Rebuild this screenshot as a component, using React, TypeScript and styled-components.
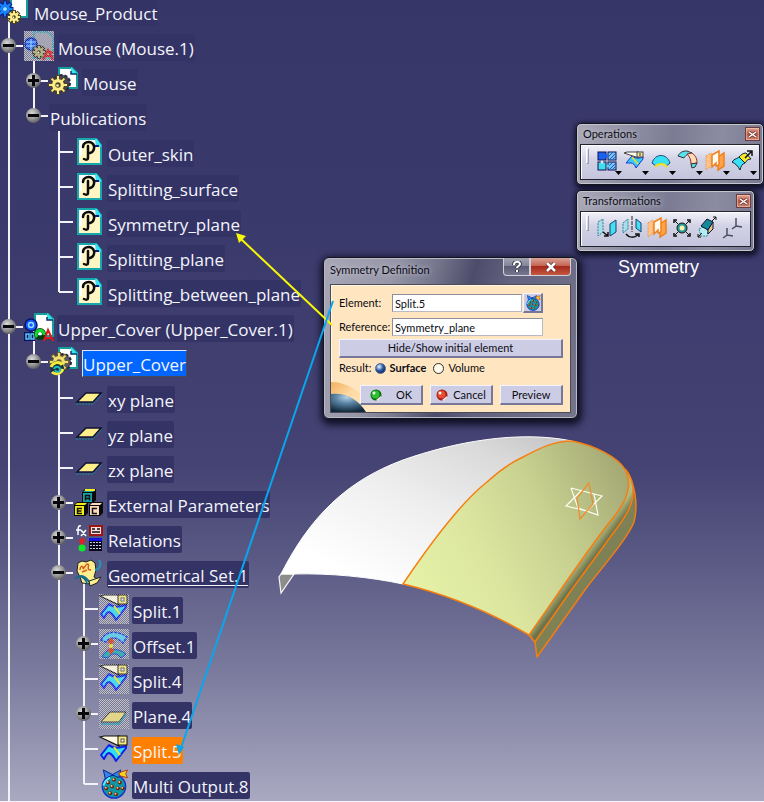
import React, { useState } from "react";
import styled, { createGlobalStyle } from "styled-components";

const GlobalStyle = createGlobalStyle`
  * { box-sizing: border-box; }
  body { margin: 0; background: #34346a; }
  button, input { font: inherit; color: inherit; }
`;

/* ---------- page ---------- */

const Viewport = styled.main`
  position: relative;
  height: 100vh;
  overflow: hidden;
  border-bottom: 1px solid #f4f4f8;
  background: linear-gradient(#363668 0%, #3b3a6c 30%, #444373 58%, #5a5a85 70%, #7b7b9e 84%, #a9a9c1 100%);
  color: #f4f4fb;
  font-family: "Open Sans", "Noto Sans", sans-serif;
`;

/* ---------- specification tree ---------- */

const Tree = styled.nav`
  margin-top: -7px;
  font-size: 17px;
  line-height: 26px;
  width: max-content;
`;

const Branch = styled.ul<{ $root?: boolean }>`
  list-style: none;
  margin: 0 0 0 ${(p) => (p.$root ? 0 : 25)}px;
  padding: 0;
`;

const Node = styled.li<{ $ends?: boolean; $gap?: number }>`
  padding-top: ${(p) => p.$gap || 0}px;
  background: linear-gradient(#f2f2f8, #f2f2f8) 8px 0 / 2px ${(p) => (p.$ends ? "18px" : "100%")} no-repeat;
`;

const Row = styled.div<{ $trunk?: number }>`
  display: flex;
  align-items: center;
  height: 35px;
  ${(p) =>
    p.$trunk !== undefined &&
    `background: linear-gradient(#f2f2f8, #f2f2f8) ${p.$trunk}px 100% / 2px 50% no-repeat;`}
`;

const Gutter = styled.span`
  flex: none;
  display: flex;
  align-items: center;
  width: 24px;
  height: 100%;
  background: linear-gradient(#f2f2f8, #f2f2f8) 9px 50% / 14px 2px no-repeat;
`;

const Toggle = styled.button`
  width: 17px;
  height: 17px;
  padding: 0;
  border: 0;
  background: none;
  cursor: pointer;
  svg { display: block; }
`;

const IconSlot = styled.span`
  flex: none;
  display: flex;
  justify-content: center;
  width: 30px;
  margin-right: 3px;
  svg { display: block; overflow: visible; }
`;

const Label = styled.span<{ $tone?: string }>`
  height: 27px;
  margin-top: 4px;
  padding: 2px 1px 0;
  border-radius: 2px;
  white-space: nowrap;
  background: #333366;
  ${(p) => p.$tone === "active" && "background: #0066ff; border-radius: 0; border: 1px solid #dfe6f5; border-right-color: #4a4a55; border-bottom-color: #4a4a55; padding: 1px 0 0;"}
  ${(p) => p.$tone === "picked" && "background: #ff8000;"}
  ${(p) => p.$tone === "current" && "text-decoration: underline; text-decoration-thickness: 1px; text-underline-offset: 3px;"}
`;

/* ---------- windows ---------- */

const Frame = styled.section`
  position: relative;
  width: max-content;
  border: 1px solid #14141f;
  border-radius: 5px;
  padding: 0 3px 4px 3px;
  background: linear-gradient(100deg, #a9a9b7 0%, #8f8fa3 28%, #7b7b94 50%, #8c8ca1 75%, #77778f 100%);
  box-shadow: inset 0 0 0 1px #c5c5d2, 1px 2px 5px 2px rgba(8, 8, 26, 0.8);
  color: #0c0c14;
  font-family: Lato, "Open Sans", sans-serif;
  font-size: 11px;
  line-height: 16px;
`;

const TitleBar = styled.header`
  display: flex;
  justify-content: space-between;
  align-items: center;
  height: 20px;
  padding: 0 0 0 3px;
`;

const Title = styled.h2`
  margin: 0;
  font-size: 11px;
  font-weight: 400;
  text-shadow: 0 0 5px #d5d5e0;
`;

const CloseButton = styled.button`
  display: grid;
  place-items: center;
  width: 15px;
  height: 14px;
  padding: 0;
  border: 1px solid #6b3d40;
  background: linear-gradient(#e3a593, #bd5a44 50%, #c9806c);
  box-shadow: inset 0 0 0 1px rgba(255, 220, 205, 0.45);
`;

const ToolStrip = styled.div<{ $end: number }>`
  display: flex;
  align-items: flex-start;
  border: 1px solid #23232f;
  height: 36px;
  padding: 3px ${(p) => p.$end}px 0 5px;
  background: linear-gradient(#f2f2fa, #d3d3e6 40%, #c4c4dd);
  box-shadow: inset 1px 1px 0 #fff;
`;

const Grip = styled.span`
  width: 3px;
  height: 16px;
  margin-right: 6px;
  border: 1px solid #fff;
  border-right-color: #9a9aae;
  border-bottom-color: #9a9aae;
`;

const Tool = styled.button<{ $w: number }>`
  width: ${(p) => p.$w}px;
  height: 29px;
  padding: 0;
  border: 0;
  background: none;
  svg { display: block; }
`;

const Palettes = styled.aside`
  position: absolute;
  left: 576px;
  top: 123px;
  display: flex;
  flex-direction: column;
  align-items: flex-start;
  gap: 5px;
`;

const Caption = styled.p`
  margin: 0 0 0 42px;
  color: #fff;
  font: 18px/20px "Liberation Sans", Arial, sans-serif;
`;

const DialogPlace = styled.div`
  position: absolute;
  left: 323px;
  top: 257px;
`;

const DialogFrame = styled(Frame)`
  padding: 0 6px 5px;
  border-radius: 6px;
  background: linear-gradient(105deg, #a7a7b6 0%, #9696a8 25%, #77778e 38%, #4d4d6b 52%, #62627f 65%, #75758d 100%);
  box-shadow: inset 0 0 0 1px #b9b9c8, 1px 3px 7px 3px rgba(8, 8, 26, 0.85);
`;

const DialogTitle = styled(TitleBar)`
  height: 26px;
  padding: 0;
  align-items: flex-start;
  h2 { padding-top: 4px; }
`;

const Caps = styled.div`
  display: flex;
`;

const CapButton = styled.button<{ $close?: boolean }>`
  display: grid;
  place-items: center;
  width: ${(p) => (p.$close ? 41 : 27)}px;
  height: 18px;
  padding: 0;
  border: 1px solid #d0d0dc;
  border-top: 0;
  border-radius: ${(p) => (p.$close ? "0 0 4px 0" : "0 0 0 4px")};
  background: ${(p) =>
    p.$close
      ? "linear-gradient(#d9a297, #c56554 45%, #a62a1d 50%, #c4583f)"
      : "linear-gradient(#a3a3b3, #85859a 45%, #5b5b75 50%, #77778f)"};
`;

const DialogBody = styled.form`
  position: relative;
  isolation: isolate;
  display: flex;
  flex-direction: column;
  border: 1px solid #4b4a55;
  padding: 6px 7px 7px 8px;
  background: #ffe6c0;
  box-shadow: inset 1px 1px 0 #fff6e4;
`;

const Planet = styled.svg`
  position: absolute;
  left: 0;
  bottom: 0;
  z-index: -1;
`;

const Field = styled.div`
  display: grid;
  grid-template-columns: 53px 151px;
  align-items: center;
  height: 24px;
  padding-right: 20px;
`;

const FieldBox = styled.span`
  display: flex;
  align-items: center;
`;

const TextBox = styled.input`
  flex: 1;
  min-width: 0;
  height: 18px;
  padding: 0 2px;
  border: 1px solid #8d8d9c;
  border-right-color: #b9b9c4;
  border-bottom-color: #b9b9c4;
  background: #fff;
`;

const PushButton = styled.button`
  display: flex;
  align-items: center;
  justify-content: center;
  height: 19px;
  padding: 0;
  border: 1px solid #f3f3fb;
  border-right: 2px solid #77779a;
  border-bottom: 2px solid #77779a;
  background: #cccce4;
`;

const SquareButton = styled(PushButton)`
  width: 20px;
  height: 20px;
  margin-left: 1px;
`;

const ActionButton = styled(PushButton)`
  width: 63px;
  height: 20px;
  gap: 14px;
`;

const CancelButton = styled(ActionButton)`
  gap: 5px;
`;

const Result = styled.fieldset`
  display: flex;
  align-items: center;
  margin: 2px 0 0;
  padding: 0;
  border: 0;
  height: 24px;
`;

const Choice = styled.label`
  display: flex;
  align-items: center;
  margin-left: 3px;
  margin-right: 4px;
`;

const Radio = styled.input`
  appearance: none;
  width: 11px;
  height: 11px;
  margin: 0 4px 0 0;
  border: 1px solid #2b2b33;
  border-radius: 50%;
  background: #fffbe9;
  &:checked {
    border-color: #4b618e;
    background: radial-gradient(circle at 35% 30%, #c7dcf5 0 10%, #2c5aa3 45%, #0c2352 85%);
  }
  &:checked + span { font-weight: 700; }
`;

const Actions = styled.div`
  display: flex;
  justify-content: flex-end;
  gap: 7px;
  padding-top: 1px;
`;

const Scene = styled.svg`
  position: absolute;
  left: 270px;
  top: 425px;
`;

const Leaders = styled.svg`
  position: absolute;
  left: 0;
  top: 0;
  pointer-events: none;
`;

/* ---------- tree icons ---------- */

const Gear = ({ x, y, r, fill, edge }: { x: number; y: number; r: number; fill: string; edge: string }) => {
  const teeth = [0, 45, 90, 135];
  const reach = r * 1.5;
  return (
    <g transform={`translate(${x} ${y})`}>
      {teeth.map((a) => (
        <rect key={`o${a}`} x={-reach - 1} y="-2" width={reach * 2 + 2} height="4" fill={edge} transform={`rotate(${a})`} />
      ))}
      <circle r={r + 1} fill={edge} />
      {teeth.map((a) => (
        <rect key={`i${a}`} x={-reach} y="-1" width={reach * 2} height="2" fill={fill} transform={`rotate(${a})`} />
      ))}
      <circle r={r} fill={fill} />
      <circle r={r * 0.45} fill={edge} />
      <circle cx="-.5" cy=".5" r={r * 0.22} fill="#fff7a8" />
    </g>
  );
};

const Page = ({ x, y, w, h }: { x: number; y: number; w: number; h: number }) => (
  <g transform={`translate(${x} ${y})`}>
    <path d={`M1 1H${w - 6}L${w - 1} 6V${h - 1}H1Z`} fill="#fff" stroke="#159c9c" strokeWidth="2" />
    <path d={`M${w - 7} 0V7H${w}Z`} fill="#35e6ef" />
    <path d={`M${w - 7} 4V7H${w - 1}`} fill="none" stroke="#12306b" strokeWidth="1.500" />
  </g>
);

const Veil = ({ id, children }: { id: string; children: React.ReactNode }) => (
  <svg width="30" height="30" viewBox="0 0 30 30" aria-hidden="true">
    <defs>
      <pattern id={id} width="2" height="2" patternUnits="userSpaceOnUse">
        <rect width="1" height="1" fill="#c2c2ce" />
        <rect x="1" y="1" width="1" height="1" fill="#c2c2ce" />
      </pattern>
    </defs>
    <rect width="30" height="30" fill="#77778f" />
    <rect width="30" height="30" fill={`url(#${id})`} />
    {children}
    <rect width="30" height="30" fill={`url(#${id})`} opacity=".4" />
  </svg>
);

const RootIcon = () => (
  <svg width="30" height="30" viewBox="0 0 30 30" aria-hidden="true">
    <Page x={10} y={-4} w={18} h={26} />
    <Gear x={5} y={13} r={5} fill="#1685ff" edge="#0b1d86" />
    <circle cx="5" cy="13" r="2" fill="#8fe6ff" />
    <Gear x={14} y={21} r={4} fill="#ffee8c" edge="#4a4424" />
  </svg>
);

const HiddenComponentIcon = () => (
  <Veil id="dots-component">
    <path d="M10 1h14l5 5v21H10z" fill="#9d9dad" stroke="#1aa3b0" strokeWidth="1.500" strokeDasharray="2 1" />
    <circle cx="7" cy="13" r="6" fill="#1450f0" stroke="#06209c" strokeWidth="1.500" />
    <path d="M2 11h10M2 15h10M7 8v11" stroke="#9be2ff" strokeWidth="1" />
    <Gear x={15} y={21} r={4} fill="#b4ae78" edge="#33332c" />
    <path d="M19 29l5-10 5 10M21 25h8M24 20l5 2" stroke="#d81818" fill="none" strokeWidth="2" />
  </Veil>
);

const ComponentIcon = () => (
  <svg width="30" height="30" viewBox="0 0 30 30" aria-hidden="true">
    <Page x={10} y={1} w={20} h={24} />
    <circle cx="7" cy="13" r="6" fill="#1458ff" stroke="#06126e" strokeWidth="1.500" />
    <circle cx="7" cy="13" r="2.500" fill="none" stroke="#8fdcff" strokeWidth="1.500" />
    <path d="M0 20h11v9H0z" fill="#06126e" />
    <path d="M2 22h3v5H2zM7 22h3v5H7z" fill="none" stroke="#5fc5e8" strokeWidth="1.500" />
    <circle cx="16" cy="22" r="4" fill="none" stroke="#053c0c" strokeWidth="4" />
    <path d="M13 25a4 4 0 1 1 7-2" fill="none" stroke="#16d832" strokeWidth="3" />
    <path d="M20 29l4-11 5 11M22 26h6" stroke="#e01818" fill="none" strokeWidth="2" />
  </svg>
);

const PartIcon = () => (
  <svg width="30" height="30" viewBox="0 0 30 30" aria-hidden="true">
    <Page x={9} y={1} w={20} h={22} />
    <circle cx="13" cy="17" r="8" fill="#44445c" stroke="#26263e" strokeWidth="2" strokeDasharray="3 2" />
    <Gear x={9} y={19} r={6} fill="#ffeb85" edge="#4c462a" />
  </svg>
);

const ActivePartIcon = () => (
  <svg width="30" height="30" viewBox="0 0 30 30" aria-hidden="true">
    <Page x={9} y={0} w={20} h={22} />
    <circle cx="14" cy="15" r="8" fill="#55556f" stroke="#22223c" strokeWidth="2" strokeDasharray="3 2" />
    <Gear x={10} y={15} r={6} fill="#f0de70" edge="#6a6230" />
    <circle cx="8" cy="21" r="7" fill="#17343c" />
    <path d="M2 20c2-5 9-6 11-2M14 22c-2 5-8 6-11 3" fill="none" stroke="#f2ec3a" strokeWidth="3" />
    <path d="M5 22c1-3 5-3 6 0s-4 4-5 1" fill="none" stroke="#22b9c4" strokeWidth="2" />
  </svg>
);

const PublicationIcon = () => (
  <svg width="25" height="27" viewBox="0 0 25 27" aria-hidden="true">
    <path d="M1 1h18l5 6v19H1z" fill="#fff6c4" stroke="#15a9ae" strokeWidth="2" />
    <path d="M2 2h16v3H2zM2 2h3v16H2z" fill="#fff" />
    <path d="M18 1h2l4 6v2h-5z" fill="#35e2ee" />
    <path d="M6 9c0-5 6-6 9-4 4 3 2 9-2 10M11 8v12c0 2-2 2-4 1" fill="none" stroke="#0c0c0c" strokeWidth="2.500" strokeLinecap="round" />
    <path d="M18 8h4" stroke="#181880" strokeWidth="2" />
  </svg>
);

const PlaneIcon = () => (
  <svg width="28" height="14" viewBox="0 0 28 14" aria-hidden="true">
    <path d="M2 11L11 2h15l-8 9z" fill="#ffee8a" stroke="#111133" strokeWidth="1.500" />
    <path d="M1 13h17L27 3" fill="none" stroke="#178f96" strokeWidth="1" strokeDasharray="2 1" />
  </svg>
);

const Block = ({ x, y, fill, glyph }: { x: number; y: number; fill: string; glyph: string }) => (
  <g transform={`translate(${x} ${y})`}>
    <path d="M0 3L3 0h11v11l-3 3H0z" fill="#0a0a0a" />
    <path d="M3 1h10l-2 2H1z" fill={fill} />
    <rect x="1" y="4" width="9" height="9" fill={fill} />
    <path d={glyph} fill="none" stroke="#111" strokeWidth="1.500" />
  </g>
);

const ParametersIcon = () => (
  <svg width="30" height="28" viewBox="0 0 30 28" aria-hidden="true">
    <Block x={8} y={0} fill="#15a3a6" glyph="M3.500 11.500v-5h4v5M3.500 9.500h4" />
    <Block x={0} y={13} fill="#f4ee1c" glyph="M8 6.500H3.500v5H8M3.500 9h4" />
    <Block x={15} y={13} fill="#fcd9bd" glyph="M8 6.500H3.500v5H8" />
    <path d="M11 1h10" stroke="#f4ee1c" strokeWidth="2" />
  </svg>
);

const RelationsIcon = () => (
  <svg width="28" height="28" viewBox="0 0 28 28" aria-hidden="true">
    <path d="M6 2c-3-1-3 2-3 9M1 6h5M6 6l5 6M11 6l-5 6" stroke="#fff" fill="none" strokeWidth="1.500" />
    <rect x="15" y="2" width="12" height="9" fill="#f5e0dc" stroke="#9b1515" strokeWidth="2" />
    <path d="M17 5h3M22 5h3M17 8h8" stroke="#111" strokeWidth="1.500" />
    <path d="M7 14v12M4 17h6" stroke="#e32020" strokeWidth="3" />
    <circle cx="7" cy="24" r="3.500" fill="#12e62c" />
    <path d="M14 14h13v3H14z" fill="#1414e8" />
    <rect x="14" y="17" width="13" height="10" fill="#080818" />
    <path d="M15 18.500h11M15 21.500h11M15 24.500h11" stroke="#c9cdf0" strokeWidth="1" strokeDasharray="2 1" />
  </svg>
);

const GeoSetIcon = () => (
  <svg width="30" height="28" viewBox="0 0 30 28" aria-hidden="true">
    <path d="M4 4l4-2 4 1 5-2 4 3 1 7-2 7 4 3-7 4-9-1-2-6-3-6z" fill="#ffee8e" stroke="#222" />
    <path d="M6 11c0-4 3-5 3-2s3-4 4-4c4 0-2 6 4 6M8 13l5-2" fill="none" stroke="#d85a1c" strokeWidth="1.500" />
    <path d="M25 1c3 4 1 9-4 10" fill="none" stroke="#2494b8" strokeWidth="2" />
    <path d="M1 20c6-6 12-3 16 6M3 18c4-1 8 0 12 5M5 17c4 1 7 4 9 9" fill="none" stroke="#126a8c" strokeWidth="1.500" />
    <path d="M15 22l12-4-4 6-7 3z" fill="#ffee8e" stroke="#222" />
  </svg>
);

const SplitArt = () => (
  <>
    <path d="M2 20L10 10c3 3 8 4 17 1v2L17 26c-2-4-4-7-7-8-2 0-3 2-5 6z" fill="#31dcf6" stroke="#1020e8" strokeWidth="2" strokeLinejoin="round" />
    <path d="M15 12l6 8" stroke="#f2e916" strokeWidth="2" />
    <path d="M1 2l4-1h15v10z" fill="#fffbe2" stroke="#111" strokeWidth="1.200" />
    <rect x="19" y="1" width="9" height="9" fill="#f8e97c" stroke="#111" />
    <rect x="22" y="4" width="3" height="3" fill="#fff" stroke="#555" />
  </>
);

const SplitIcon = () => (
  <svg width="30" height="28" viewBox="0 0 30 28" aria-hidden="true"><SplitArt /></svg>
);
const HiddenSplitIcon = ({ id }: { id: string }) => <Veil id={id}><SplitArt /></Veil>;

const HiddenOffsetIcon = () => (
  <Veil id="dots-offset">
    <path d="M2 11C6 3 16 0 28 8l-4 6C16 6 10 9 7 13z" fill="#55cdea" stroke="#1330d8" strokeWidth="1.500" strokeDasharray="3 1" />
    <path d="M3 28c3-9 16-10 24-3l-5 4c-4-6-10-5-13 0z" fill="#1fa7a8" stroke="#1330d8" />
    <path d="M12 10v14M9 14l3-4 3 4M9 20l3 4 3-4" stroke="#d43c16" strokeWidth="2" fill="none" />
    <circle cx="12" cy="17" r="2" fill="#f5e321" />
  </Veil>
);

const HiddenPlaneIcon = () => (
  <Veil id="dots-plane">
    <path d="M2 23l9-10h16l-7 10z" fill="#ecd977" stroke="#24243a" />
    <path d="M2 25h18l7-10" fill="none" stroke="#1f9aae" strokeWidth="1.500" />
  </Veil>
);

const seeds = [[9, 14], [15, 11], [21, 14], [7, 20], [13, 18], [19, 20], [24, 20], [11, 25], [17, 26]];

const PomegranateArt = () => (
  <>
    <circle cx="15" cy="18" r="12" fill="#1298a4" stroke="#1230cf" strokeWidth="1.500" />
    <path d="M4 1l10 5-8 4zM13 6l9-5-2 8z" fill="#2f86f0" stroke="#0a2288" />
    <path d="M20 4l9-3-2 4 2 4-8-2z" fill="#f4d51e" stroke="#b33a12" />
    {seeds.map(([x, y]) => (
      <g key={`${x}-${y}`}>
        <circle cx={x} cy={y} r="2" fill="#6c1c0c" />
        <circle cx={x - 0.5} cy={y - 0.5} r="1" fill="#ffd08a" />
      </g>
    ))}
    <path d="M4 17c1-3 3-6 7-8" stroke="#5ff0ff" fill="none" strokeWidth="2" />
  </>
);

const MultiOutputIcon = ({ size = 30 }: { size?: number }) => (
  <svg width={size} height={size} viewBox="0 0 30 31" aria-hidden="true"><PomegranateArt /></svg>
);

const ToggleGlyph = ({ open }: { open: boolean }) => (
  <svg width="17" height="17" viewBox="0 0 17 17" aria-hidden="true">
    <defs>
      <radialGradient id="ball" cx="40%" cy="35%" r="65%">
        <stop offset="0" stopColor="#dcdcdc" />
        <stop offset=".6" stopColor="#969696" />
        <stop offset="1" stopColor="#606066" />
      </radialGradient>
    </defs>
    <circle cx="8.500" cy="8.500" r="7.500" fill="url(#ball)" />
    <path d={open ? "M3 8.500h11" : "M3 8.500h11M8.500 3v11"} stroke="#08080c" strokeWidth="3" />
  </svg>
);

/* ---------- tree data ---------- */

type TreeNode = {
  label: string;
  icon?: React.ReactNode;
  toggle?: "open" | "closed";
  tone?: string;
  gap?: number;
  continues?: boolean;
  children?: TreeNode[];
};

const pub = (label: string, gap?: number): TreeNode => ({ label, icon: <PublicationIcon />, gap });
const plane = (label: string, gap?: number): TreeNode => ({ label, icon: <PlaneIcon />, gap });

const nodes: TreeNode[] = [
  {
    label: "Mouse (Mouse.1)", icon: <HiddenComponentIcon />, toggle: "open",
    children: [
      { label: "Mouse", icon: <PartIcon />, toggle: "closed" },
      {
        label: "Publications", toggle: "open",
        children: [pub("Outer_skin", 1), pub("Splitting_surface"), pub("Symmetry_plane"), pub("Splitting_plane"), pub("Splitting_between_plane")],
      },
    ],
  },
  {
    label: "Upper_Cover (Upper_Cover.1)", icon: <ComponentIcon />, toggle: "open", continues: true,
    children: [
      {
        label: "Upper_Cover", icon: <ActivePartIcon />, toggle: "open", tone: "active",
        children: [
          plane("xy plane", 1), plane("yz plane"), plane("zx plane"),
          { label: "External Parameters", icon: <ParametersIcon />, toggle: "closed" },
          { label: "Relations", icon: <RelationsIcon />, toggle: "closed" },
          {
            label: "Geometrical Set.1", icon: <GeoSetIcon />, toggle: "open", tone: "current", continues: true,
            children: [
              { label: "Split.1", icon: <HiddenSplitIcon id="dots-split-1" />, gap: 1 },
              { label: "Offset.1", icon: <HiddenOffsetIcon />, toggle: "closed" },
              { label: "Split.4", icon: <HiddenSplitIcon id="dots-split-4" /> },
              { label: "Plane.4", icon: <HiddenPlaneIcon />, toggle: "closed" },
              { label: "Split.5", icon: <SplitIcon />, tone: "picked" },
              { label: "Multi Output.8", icon: <MultiOutputIcon /> },
            ],
          },
        ],
      },
    ],
  },
];

const TreeItem = ({ node, last }: { node: TreeNode; last: boolean }) => {
  const [open, setOpen] = useState(node.toggle === "open");
  return (
    <Node $ends={last && !node.continues} $gap={node.gap}>
      <Row $trunk={open && node.children ? 33 : undefined}>
        <Gutter>
          {node.toggle && (
            <Toggle type="button" aria-label={`${open ? "Collapse" : "Expand"} ${node.label}`} onClick={() => setOpen(!open)}>
              <ToggleGlyph open={open} />
            </Toggle>
          )}
        </Gutter>
        {node.icon && <IconSlot>{node.icon}</IconSlot>}
        <Label $tone={node.tone}>{node.label}</Label>
      </Row>
      {open && node.children && (
        <Branch>
          {node.children.map((child, i) => (
            <TreeItem key={child.label} node={child} last={i === node.children!.length - 1} />
          ))}
        </Branch>
      )}
    </Node>
  );
};

/* ---------- toolbar icons ---------- */

const JoinArt = () => (
  <>
    <rect x="2" y="3" width="8" height="8" fill="#1b62ee" stroke="#101050" />
    <rect x="12" y="3" width="8" height="8" fill="#7cc4f2" stroke="#101050" />
    <rect x="2" y="13" width="8" height="8" fill="#43dcf2" stroke="#101050" />
    <rect x="12" y="13" width="8" height="8" fill="#7cc4f2" stroke="#101050" />
    <path d="M13 7l4-4M13 11l7-7M16 11l4-4M13 17l4-4M13 21l7-7M16 21l4-4" stroke="#1c5cc0" />
    <circle cx="10" cy="7" r="2" fill="#1b62ee" />
    <circle cx="6" cy="13" r="1.500" fill="#dfe2f4" />
    <circle cx="12" cy="17" r="1.500" fill="#43dcf2" />
  </>
);
const TrimArt = () => (
  <>
    <path d="M3 14l6-7c2 2 6 3 11 1v2l-7 9c-1-3-3-5-5-5z" fill="#37cdf5" stroke="#1638d8" strokeLinejoin="round" />
    <path d="M9 8l6 7" stroke="#f2e021" strokeWidth="1.500" />
    <path d="M1 4l3-1h12v6z" fill="#fffdf0" stroke="#444" />
    <rect x="14" y="3" width="6" height="5" fill="#f4e8a0" stroke="#444" />
    <path d="M17 4v3" stroke="#333" />
  </>
);
const BoundaryArt = () => (
  <>
    <path d="M2 14C5 4 17 4 20 14l-4 3c-4-3-7-3-10 0z" fill="#37e2f5" stroke="#1c4a80" />
    <path d="M5 18c3-4 9-4 12 0" stroke="#f2e021" strokeWidth="2" fill="none" />
  </>
);
const FilletArt = () => (
  <>
    <path d="M1 7c2-4 5-5 9-5l5 2c-5 1-7 3-8 5z" fill="#58e2f0" stroke="#333" />
    <path d="M10 5l5-1c4 3 5 6 5 10l-6 1c0-4-1-7-4-10z" fill="#ffd9b8" stroke="#8e2c1c" />
    <path d="M14 15l6-1-2 4-3 1z" fill="#58e2f0" stroke="#333" />
  </>
);
const SymmetryArt = () => (
  <>
    <path d="M2 7l5-3v13l-5 4z" fill="#ffc48a" stroke="#f08a34" strokeDasharray="1 1" />
    <path d="M14 8l6-4v13l-6 4z" fill="#ffa24c" stroke="#f08018" strokeWidth="1.500" />
    <path d="M8 6l7-4v14l-3 1v-3l-4 4z" fill="#fffaf0" stroke="#f08018" strokeWidth="1.500" />
  </>
);
const ExtrapolateArt = () => (
  <>
    <path d="M1 13c3-4 5-3 7-5l6 6c-3 1-4 3-5 7-2-4-4-6-8-8z" fill="#3be0f4" stroke="#123" />
    <path d="M8 8c2-2 4-4 7-4l5 6c-3 0-5 2-6 4z" fill="#f6ea2a" stroke="#123" />
    <path d="M14 9l6-6M16 2h5v5" stroke="#111" strokeWidth="1.500" fill="none" />
  </>
);
const TranslateArt = () => (
  <>
    <path d="M2 6l5 -3v13l-5 4z" fill="#a9dde9" stroke="#2b7e92" strokeDasharray="2 1" />
    <path d="M14 8l6-4v12l-6 4z" fill="#46dff2" stroke="#173f70" />
    <path d="M7 16l5 4M12 16v4h-4" stroke="#111" fill="none" strokeWidth="1.500" />
  </>
);
const RotateArt = () => (
  <>
    <path d="M2 7l5-4v10l-5 4z" fill="#a9dde9" stroke="#2b7e92" strokeDasharray="2 1" />
    <path d="M11 0v16" stroke="#222" strokeDasharray="4 1" />
    <path d="M15 3l5 4v9l-5-4z" fill="#46dff2" stroke="#173f70" />
    <path d="M5 18c3 4 8 4 12 1M14 18h4v3" stroke="#111" fill="none" strokeWidth="1.500" />
  </>
);
const ScaleArt = () => (
  <>
    <circle cx="11" cy="12" r="5" fill="#2a9b94" stroke="#111" />
    <circle cx="11" cy="12" r="2.500" fill="#fbf4b0" />
    <path d="M7 8L4 5M15 8l3-3M7 16l-3 3M15 16l3 3" stroke="#111" />
    <path d="M3 7V4h3M16 4h3v3M3 17v3h3M16 20h3v-3" fill="none" stroke="#111" strokeWidth="1.500" />
  </>
);
const AffinityArt = () => (
  <>
    <path d="M3 13l5-2 4 4-1 5H5z" fill="#b5ecf4" stroke="#2d8ba0" strokeDasharray="2 1" />
    <path d="M5 10l6-7 6 3-5 8z" fill="#128b96" stroke="#113" />
    <path d="M12 14l5-8v7l-5 5z" fill="#e2cc8c" stroke="#113" />
    <path d="M16 5l4-4M17 1h3v3M6 17l-4 4M2 18v3h3" stroke="#111" fill="none" />
  </>
);
const AxisArt = () => (
  <path d="M15 2v8l-4 3M15 10l6 1M6 12v7l-4 3M6 19l6 1" stroke="#4e4e68" strokeWidth="1.500" fill="none" />
);

const operations = [
  ["Join", JoinArt], ["Split", TrimArt], ["Boundary", BoundaryArt],
  ["Fillet", FilletArt], ["Transform", SymmetryArt], ["Extrapolate", ExtrapolateArt],
] as const;

const transformations = [
  ["Translate", TranslateArt], ["Rotate", RotateArt], ["Symmetry", SymmetryArt],
  ["Scaling", ScaleArt], ["Affinity", AffinityArt], ["Axis to axis", AxisArt],
] as const;

const SmallCross = () => (
  <svg width="9" height="7" viewBox="0 0 9 7" aria-hidden="true">
    <path d="M1 1l7 5M8 1L1 6" stroke="#6d3a38" strokeWidth="3" />
    <path d="M1 1l7 5M8 1L1 6" stroke="#fff" strokeWidth="1.500" />
  </svg>
);

const Toolbar = ({ title, tools, step, end, menus }: {
  title: string; tools: typeof operations | typeof transformations; step: number; end: number; menus?: boolean;
}) => (
  <Frame aria-label={title}>
    <TitleBar>
      <Title>{title}</Title>
      <CloseButton type="button" aria-label={`Close ${title}`}><SmallCross /></CloseButton>
    </TitleBar>
    <ToolStrip role="toolbar" $end={end}>
      <Grip />
      {tools.map(([name, Art]) => (
        <Tool key={name} type="button" title={name} aria-label={name} $w={step}>
          <svg width={step} height="29" viewBox={`0 0 ${step} 29`} aria-hidden="true">
            <g transform="translate(1 1)"><Art /></g>
            {menus && <path d={`M${step - 7} 23h7l-3.500 4z`} fill="#000" />}
          </svg>
        </Tool>
      ))}
    </ToolStrip>
  </Frame>
);

const Bead = ({ color, dark }: { color: string; dark: string }) => (
  <svg width="12" height="12" viewBox="0 0 12 12" aria-hidden="true">
    <circle cx="6" cy="6" r="5.500" fill={dark} />
    <circle cx="5.500" cy="5.500" r="4" fill={color} />
    <circle cx="4" cy="4" r="1.500" fill="#e8ffe8" />
    <path d="M6 11l5-4v2l-3 3z" fill="#f0e6e6" />
  </svg>
);

const SymmetryDialog = () => (
  <DialogPlace>
    <DialogFrame role="dialog" aria-label="Symmetry Definition">
      <DialogTitle>
        <Title>Symmetry Definition</Title>
        <Caps>
          <CapButton type="button" aria-label="Help">
            <svg width="10" height="12" viewBox="0 0 10 12" aria-hidden="true">
              <path d="M2 4c0-4 6-4 6-1 0 2-3 2-3 4M5 9v2" stroke="#3c3c50" strokeWidth="4" fill="none" />
              <path d="M2 4c0-4 6-4 6-1 0 2-3 2-3 4M5 9v2" stroke="#fff" strokeWidth="2" fill="none" />
            </svg>
          </CapButton>
          <CapButton type="button" aria-label="Close" $close>
            <svg width="12" height="10" viewBox="0 0 12 10" aria-hidden="true">
              <path d="M2 1l8 8M10 1L2 9" stroke="#5c2a28" strokeWidth="4" />
              <path d="M2 1l8 8M10 1L2 9" stroke="#fff" strokeWidth="2.500" />
            </svg>
          </CapButton>
        </Caps>
      </DialogTitle>
      <DialogBody onSubmit={(e) => e.preventDefault()}>
        <Planet width="50" height="32" viewBox="0 0 50 32" aria-hidden="true">
          <defs>
            <linearGradient id="glow" x1="0" y1="0" x2=".9" y2=".7">
              <stop offset="0" stopColor="#f2b05c" />
              <stop offset=".5" stopColor="#ffd9a4" />
              <stop offset="1" stopColor="#ffe6c0" />
            </linearGradient>
            <radialGradient id="globe" cx="45%" cy="20%" r="80%">
              <stop offset="0" stopColor="#b4d2e6" />
              <stop offset=".4" stopColor="#5c86a6" />
              <stop offset="1" stopColor="#12293c" />
            </radialGradient>
          </defs>
          <path d="M0 2c18 0 34 12 44 30H0z" fill="url(#glow)" />
          <path d="M0 14c14-2 27 5 35 18H0z" fill="url(#globe)" />
        </Planet>
        <Field>
          <label htmlFor="element">Element:</label>
          <FieldBox>
            <TextBox id="element" defaultValue="Split.5" />
            <SquareButton type="button" aria-label="Multiple elements"><MultiOutputIcon size={16} /></SquareButton>
          </FieldBox>
        </Field>
        <Field>
          <label htmlFor="reference">Reference:</label>
          <FieldBox><TextBox id="reference" defaultValue="Symmetry_plane" /></FieldBox>
        </Field>
        <PushButton type="button">Hide/Show initial element</PushButton>
        <Result>
          <span>Result:</span>
          <Choice><Radio type="radio" name="result" defaultChecked /><span>Surface</span></Choice>
          <Choice><Radio type="radio" name="result" /><span>Volume</span></Choice>
        </Result>
        <Actions>
          <ActionButton type="submit"><Bead color="#2fc12f" dark="#0c6a12" />OK</ActionButton>
          <CancelButton type="button"><Bead color="#e84a36" dark="#a01c10" />Cancel</CancelButton>
          <ActionButton type="button">Preview</ActionButton>
        </Actions>
      </DialogBody>
    </DialogFrame>
  </DialogPlace>
);

/* ---------- 3D part ---------- */

const MouseCover = () => (
  <Scene width="380" height="240" viewBox="0 0 380 240" role="img" aria-label="Mouse cover surface with symmetry preview">
    <defs>
      <linearGradient id="white-skin" x1="0" y1="1" x2="1" y2="0">
        <stop offset=".15" stopColor="#ffffff" />
        <stop offset=".5" stopColor="#efefef" />
        <stop offset=".8" stopColor="#dadada" />
        <stop offset="1" stopColor="#c2c2c2" />
      </linearGradient>
      <linearGradient id="green-skin" x1="0" y1=".7" x2="1" y2=".25">
        <stop offset="0" stopColor="#e6f2a8" />
        <stop offset=".35" stopColor="#dbe59e" />
        <stop offset=".65" stopColor="#c8d190" />
        <stop offset="1" stopColor="#a6ab76" />
      </linearGradient>
      <linearGradient id="edge-skin" gradientUnits="userSpaceOnUse" x1="306" y1="140" x2="322" y2="152">
        <stop offset="0" stopColor="#b3bb80" />
        <stop offset=".5" stopColor="#6d7048" />
        <stop offset="1" stopColor="#8c9060" />
      </linearGradient>
    </defs>
    <path d="M11 149L24 149L11 168L9 152Z" fill="#8c8c8c" stroke="#f6f6f6" strokeWidth="1.200" />
    <path d="M11 149C40 92 76 56 133 35C184 17 248 5 302 16C284 18 270 23 253 32C240 38 229 46 217 57C190 78 158 122 133 159C100 152 60 148 24 149Z" fill="url(#white-skin)" stroke="#fff" />
    <path d="M259 210L265 217L267 232L317 162C340 133 358 112 364 97C368 82 366 58 355 44L340 60Z" fill="#7e8055" stroke="#f57e10" strokeWidth="1.500" strokeLinejoin="round" />
    <path d="M259 210L265 217L300 167L347 103C358 88 364 78 363 62C362 56 360 50 356 45L340 60Z" fill="url(#edge-skin)" stroke="#f57e10" strokeWidth="1.500" strokeLinejoin="round" />
    <path d="M133 159C158 122 190 78 217 57C229 46 240 38 253 32C270 23 284 16 302 16C322 20 348 31 356 46C362 60 358 74 343 93C323 117 290 166 259 210C220 187 175 169 133 159Z" fill="url(#green-skin)" stroke="#f57e10" strokeWidth="1.500" strokeLinejoin="round" />
    <path d="M301 63L332 71L317 86L296 81L312 65M301 63L308 83L328 90L324 69" fill="none" stroke="#fafff0" strokeWidth="1.200" />
    <path d="M319 58L323 79L310 94L307 73Z" fill="none" stroke="#f08a2a" strokeWidth="1.200" />
  </Scene>
);

const LeaderLines = () => (
  <Leaders width="400" height="800" viewBox="0 0 400 800" aria-hidden="true">
    <path d="M332 325L241 239" stroke="#f7f708" strokeWidth="2" />
    <path d="M236 233l10 3-7 7z" fill="#f7f708" />
    <path d="M333 301L181 748" stroke="#09a6ee" strokeWidth="2" />
    <path d="M179 755l-3-11 8 3z" fill="#09a6ee" />
  </Leaders>
);

export default function App() {
  return (
    <Viewport>
      <GlobalStyle />
      <Tree aria-label="Specification tree">
        <Row $trunk={8}>
          <IconSlot><RootIcon /></IconSlot>
          <Label>Mouse_Product</Label>
        </Row>
        <Branch $root>
          {nodes.map((node, i) => (
            <TreeItem key={node.label} node={node} last={i === nodes.length - 1} />
          ))}
        </Branch>
      </Tree>
      <MouseCover />
      <Palettes>
        <Toolbar title="Operations" tools={operations} step={27} end={2} menus />
        <Toolbar title="Transformations" tools={transformations} step={25} end={5} />
        <Caption>Symmetry</Caption>
      </Palettes>
      <SymmetryDialog />
      <LeaderLines />
    </Viewport>
  );
}
